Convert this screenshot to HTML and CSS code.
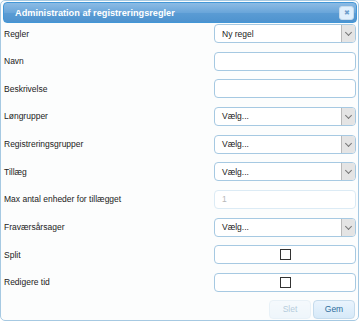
FILE: index.html
```html
<!DOCTYPE html>
<html lang="da">
  <head>
    <meta charset="UTF-8" />
    <title>Administration af registreringsregler</title>
    <link rel="stylesheet" href="styles.css">
  </head>
  <body>
    <div class="dialog">
      <div class="titlebar">
        <span class="title">Administration af registreringsregler</span>
        <button class="close-btn" type="button">&#x2716;</button>
      </div>
      <div class="content">
        <div class="row">
          <label>Regler</label>
          <div class="field select"><span>Ny regel</span><span class="arrow"></span></div>
        </div>
        <div class="row">
          <label>Navn</label>
          <div class="field"></div>
        </div>
        <div class="row">
          <label>Beskrivelse</label>
          <div class="field"></div>
        </div>
        <div class="row">
          <label>Løngrupper</label>
          <div class="field select"><span>Vælg...</span><span class="arrow"></span></div>
        </div>
        <div class="row">
          <label>Registreringsgrupper</label>
          <div class="field select"><span>Vælg...</span><span class="arrow"></span></div>
        </div>
        <div class="row">
          <label>Tillæg</label>
          <div class="field select"><span>Vælg...</span><span class="arrow"></span></div>
        </div>
        <div class="row">
          <label>Max antal enheder for tillægget</label>
          <div class="field disabled"><span>1</span></div>
        </div>
        <div class="row">
          <label>Fraværsårsager</label>
          <div class="field select"><span>Vælg...</span><span class="arrow"></span></div>
        </div>
        <div class="row">
          <label>Split</label>
          <div class="field check"><span class="box"></span></div>
        </div>
        <div class="row">
          <label>Redigere tid</label>
          <div class="field check"><span class="box"></span></div>
        </div>
      </div>
      <div class="buttonpane">
        <button type="button" class="btn btn-disabled">Slet</button>
        <button type="button" class="btn">Gem</button>
      </div>
    </div>
  </body>
</html>
```

FILE: styles.css
```css
body {
  margin: 0;
  font-family: "Liberation Sans", Arial, sans-serif;
  font-size: 8.5px;
  color: #222;
  background: #fff;
}
.dialog {
  width: 359px;
  height: 321px;
  border: 1px solid #a6c9e2;
  border-radius: 5px;
  background: #fcfdfd;
  padding: 1px 1px 0 2px;
  box-sizing: border-box;
}
.titlebar {
  display: flex;
  align-items: center;
  justify-content: space-between;
  height: 21px;
  box-sizing: border-box;
  padding: 0 2px 0 11px;
  border: 1px solid #4297d7;
  border-radius: 4px;
  background: linear-gradient(to bottom, #8cbbe4 0%, #6aa6da 50%, #5b9cd4 51%, #4e93cf 100%);
}
.title {
  color: #fff;
  font-weight: bold;
  font-size: 9.2px;
}
.close-btn {
  width: 15px;
  height: 14px;
  padding: 0;
  border: 1px solid #c5dbec;
  border-radius: 3px;
  background: #dfeffc;
  color: #6f9fcc;
  font-size: 7px;
  line-height: 12px;
  text-align: center;
}
.content {
  padding: 1px 1px 0 1px;
}
.row {
  display: flex;
  align-items: center;
  justify-content: space-between;
  height: 19px;
  margin-bottom: 8.67px;
}
.row label {
  flex: 1;
}
.field {
  width: 142px;
  height: 19px;
  box-sizing: border-box;
  border: 1px solid #a6c9e2;
  border-radius: 4px;
  background: #fff;
  display: flex;
  align-items: center;
  padding-left: 7px;
  position: relative;
  overflow: hidden;
  color: #222;
}
.select .arrow {
  position: absolute;
  right: 0;
  top: 0;
  bottom: 0;
  width: 13px;
  background: #e4e4e4;
  border-left: 1px solid #b9b9b9;
}
.select .arrow::after {
  content: "";
  position: absolute;
  left: 4px;
  top: 5px;
  width: 4px;
  height: 4px;
  border-right: 1px solid #777;
  border-bottom: 1px solid #777;
  transform: rotate(45deg);
}
.disabled {
  border-color: #dcebf5;
  color: #b8b8b8;
}
.check {
  justify-content: center;
  padding-left: 0;
}
.check .box {
  width: 9px;
  height: 9px;
  border: 1px solid #333;
  background: #fff;
}
.buttonpane {
  display: flex;
  justify-content: flex-end;
  gap: 2px;
  padding-right: 2px;
  margin-top: -0.7px;
}
.btn {
  width: 42px;
  height: 19px;
  padding: 0;
  border: 1px solid #c5dbec;
  border-radius: 4px;
  background: linear-gradient(to bottom, #eaf4fd, #d6e9f8);
  color: #2e6e9e;
  font-family: "Liberation Sans", Arial, sans-serif;
  font-size: 8.5px;
}
.btn-disabled {
  opacity: 0.35;
}
```
